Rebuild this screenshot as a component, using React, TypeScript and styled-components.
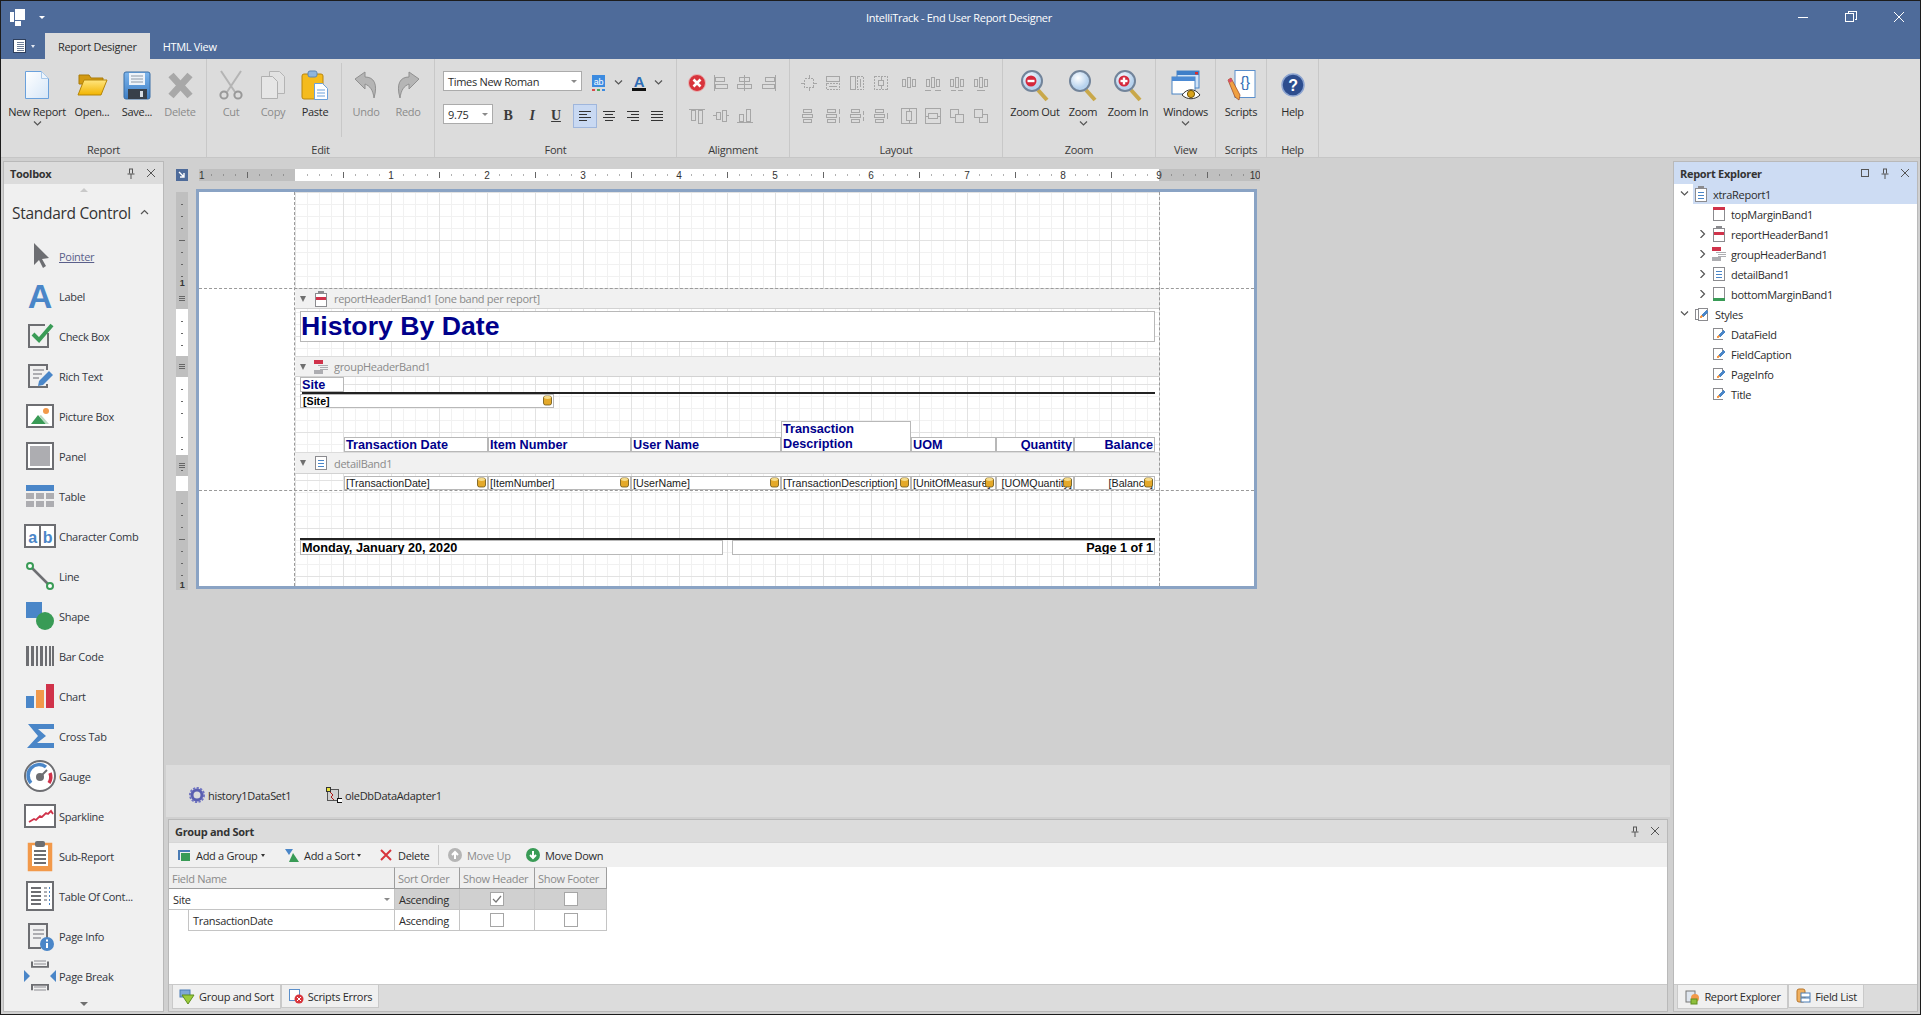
import React from 'react'
import styled, { createGlobalStyle, css } from 'styled-components'

const UI_FONT = `"Open Sans", "Noto Sans", sans-serif`
const REPORT_FONT = `"Liberation Sans", Arial, sans-serif`

const GlobalStyle = createGlobalStyle`
  html, body { margin: 0; padding: 0; background: #d0d0d0; overflow: hidden; }
  * { box-sizing: border-box; }
`

const Window = styled.div`
  width: 1921px;
  height: 1015px;
  display: flex;
  flex-direction: column;
  border: 1px solid #1c1c1c;
  background: #d0d0d0;
  color: #2b2b2b;
  font: 11px ${UI_FONT};
  letter-spacing: -0.3px;
  overflow: hidden;
`

/* ---------- title bar ---------- */

const TitleBar = styled.div`
  height: 32px;
  background: #4e6b9a;
  display: grid;
  grid-template-columns: 1fr auto 1fr;
  align-items: center;
  color: #fff;
`
const QuickAccess = styled.div`
  display: flex;
  align-items: center;
  gap: 12px;
  padding-left: 8px;
`
const TitleText = styled.div`
  font-size: 11px;
  margin-left: -3px;
`
const WindowButtons = styled.div`
  display: flex;
  justify-content: flex-end;
  align-items: center;
  gap: 34px;
  padding-right: 14px;
`
const TabStrip = styled.div`
  height: 26px;
  background: #4e6b9a;
  display: flex;
  align-items: stretch;
`
const AppMenu = styled.div`
  width: 44px;
  display: flex;
  align-items: center;
  gap: 4px;
  padding-left: 12px;
`
const RibbonTab = styled.div<{ $active?: boolean }>`
  padding: 0 13px;
  display: flex;
  align-items: center;
  font-size: 11px;
  color: ${p => (p.$active ? '#2b2b2b' : '#fff')};
  background: ${p => (p.$active ? '#dcdcdc' : 'transparent')};
`

/* ---------- ribbon ---------- */

const Ribbon = styled.div`
  height: 99px;
  background: #dcdcdc;
  border-bottom: 1px solid #c6c6c6;
  display: flex;
`
const RibbonGroup = styled.div<{ $w: number }>`
  width: ${p => p.$w}px;
  flex: none;
  border-right: 1px solid #c8c8c8;
  display: flex;
  flex-direction: column;
`
const GroupBody = styled.div<{ $pad?: number }>`
  height: 83px;
  display: flex;
  padding-left: ${p => p.$pad ?? 0}px;
`
const GroupLabel = styled.div`
  text-align: center;
  line-height: 15px;
  color: #3a3a3a;
`
const LargeButton = styled.div<{ $w: number; $off?: boolean }>`
  width: ${p => p.$w}px;
  flex: none;
  padding-top: 10px;
  display: flex;
  flex-direction: column;
  align-items: center;
  white-space: nowrap;
  color: ${p => (p.$off ? '#8b8b8b' : '#2b2b2b')};
`
const LargeLabel = styled.div`
  line-height: 16px;
  margin-top: 3px;
`
const ChevBox = styled.div`
  height: 8px;
  display: flex;
  align-items: center;
`
const GroupDivider = styled.div`
  width: 1px;
  height: 74px;
  margin: 4px 0 0 7px;
  background: #c8c8c8;
`
const SmallRows = styled.div<{ $pad?: number }>`
  display: flex;
  flex-direction: column;
  gap: 9px;
  padding: 12px 0 0 ${p => p.$pad ?? 0}px;
`
const SmallRow = styled.div`
  height: 24px;
  display: flex;
  align-items: flex-start;
`
const Cell = styled.div<{ $w?: number; $gap?: number; $active?: boolean }>`
  width: ${p => p.$w ?? 24}px;
  height: 24px;
  flex: none;
  margin-left: ${p => p.$gap ?? 0}px;
  display: flex;
  align-items: center;
  justify-content: center;
  ${p =>
    p.$active &&
    css`
      background: #c9d9f2;
      border: 1px solid #9fb6dc;
    `}
`
const StyleLetter = styled.span<{ $italic?: boolean; $underline?: boolean }>`
  font: bold 14px "Liberation Serif", serif;
  font-style: ${p => (p.$italic ? 'italic' : 'normal')};
  text-decoration: ${p => (p.$underline ? 'underline' : 'none')};
  color: #3a3a3a;
`
const Combo = styled.div<{ $w: number; $gap?: number }>`
  width: ${p => p.$w}px;
  height: 20px;
  flex: none;
  margin-left: ${p => p.$gap ?? 0}px;
  background: #fff;
  border: 1px solid #ababab;
  padding: 0 4px;
  display: flex;
  align-items: center;
  justify-content: space-between;
  font-size: 11px;
`
const ComboArrow = styled.span`
  width: 0;
  height: 0;
  border-left: 3px solid transparent;
  border-right: 3px solid transparent;
  border-top: 3px solid #8a8a8a;
`

/* ---------- workspace ---------- */

const Workspace = styled.div`
  flex: 1;
  display: flex;
  min-height: 0;
`
const DockPanel = styled.div<{ $w: number; $ml: number }>`
  width: ${p => p.$w}px;
  flex: none;
  margin: 3px 0 2px ${p => p.$ml}px;
  border: 1px solid #b9b9b9;
  display: flex;
  flex-direction: column;
  background: #f0f0f0;
  position: relative;
`
const PanelHeader = styled.div<{ $focus?: boolean }>`
  height: 22px;
  flex: none;
  padding: 0 7px 0 6px;
  display: flex;
  align-items: center;
  gap: 10px;
  background: ${p => (p.$focus ? '#cddcf3' : '#dcdcdc')};
  font-weight: 700;
  color: #333;
`
const PanelTitle = styled.div`
  flex: 1;
`

/* toolbox */
const ScrollMark = styled.div<{ $down?: boolean }>`
  height: ${p => (p.$down ? 14 : 12)}px;
  flex: none;
  display: flex;
  align-items: center;
  justify-content: center;
  &::after {
    content: '';
    border-left: 4px solid transparent;
    border-right: 4px solid transparent;
    ${p =>
      p.$down
        ? 'border-top: 4px solid #6f6f6f;'
        : 'border-bottom: 4px solid #c9c9c9;'}
  }
`
const CategoryRow = styled.div`
  height: 34px;
  flex: none;
  margin-bottom: 6px;
  display: flex;
  align-items: center;
  padding-left: 8px;
  font-size: 15.5px;
  color: #333;
  overflow: hidden;
  white-space: nowrap;
  gap: 9px;
`
const ToolList = styled.div`
  flex: 1;
  min-height: 0;
  overflow: hidden;
`
const ToolItem = styled.div`
  height: 40px;
  display: flex;
  align-items: center;
  padding-left: 20px;
  gap: 3px;
`
const ToolLabel = styled.span<{ $link?: boolean }>`
  white-space: nowrap;
  color: ${p => (p.$link ? '#5a5f8a' : '#33373f')};
  text-decoration: ${p => (p.$link ? 'underline' : 'none')};
`

/* designer */
const Center = styled.div`
  width: 1504px;
  flex: none;
  margin-left: 2px;
  display: flex;
  flex-direction: column;
`
const Designer = styled.div`
  flex: 1;
  padding: 11px 0 0 10px;
  background: #d0d0d0;
`
const RulerRow = styled.div`
  display: flex;
  gap: 11px;
  height: 12px;
  margin-bottom: 8px;
`
const RulerCorner = styled.div`
  width: 12px;
  height: 12px;
  background: #4e6b9a;
  display: flex;
  align-items: center;
  justify-content: center;
`
const PageRow = styled.div`
  display: flex;
  gap: 8px;
`
const SideRuler = styled.svg`
  width: 12px;
  height: 398px;
  margin-top: 3px;
  flex: none;
`
const Page = styled.div`
  width: 1061px;
  height: 400px;
  border: 3px solid #8aa3c4;
  background: #fff;
  letter-spacing: 0;
  display: grid;
  grid-template-columns: 95px 866px 1fr;
  position: relative;
`
const Printable = styled.div`
  grid-column: 2;
  display: flex;
  flex-direction: column;
  border-left: 1px dashed #9a9a9a;
  border-right: 1px dashed #9a9a9a;
  background-color: #fff;
  background-image:
    linear-gradient(to right, #e2e2e2 1px, transparent 1px),
    linear-gradient(to bottom, #e2e2e2 1px, transparent 1px),
    linear-gradient(to right, #f1f1f1 1px, transparent 1px),
    linear-gradient(to bottom, #f1f1f1 1px, transparent 1px);
  background-size: 48px 48px, 48px 48px, 12px 12px, 12px 12px;
`
const MarginLine = styled.div<{ $top: number }>`
  position: absolute;
  left: 0;
  right: 0;
  top: ${p => p.$top}px;
  border-top: 1px dashed #9a9a9a;
  pointer-events: none;
`
const BandHeader = styled.div<{ $h?: number }>`
  height: ${p => p.$h ?? 21}px;
  flex: none;
  background: #f1f1f1;
  border-top: 1px solid #dcdcdc;
  border-bottom: 1px solid #d2d2d2;
  display: flex;
  align-items: center;
  padding-left: 5px;
  gap: 6px;
  color: #8a8a8a;
  font-size: 11px;
  letter-spacing: -0.3px;
`
const BandArrow = styled.span`
  width: 0;
  height: 0;
  border-left: 3.5px solid transparent;
  border-right: 3.5px solid transparent;
  border-top: 6px solid #6f6f6f;
  margin-right: 2px;
`
const Band = styled.div<{ $h: number }>`
  height: ${p => p.$h}px;
  flex: none;
  position: relative;
`
// report controls sit on a free canvas inside their band
const Control = styled.div<{ $x: number; $y: number; $w: number; $h: number; $right?: boolean }>`
  position: absolute;
  left: ${p => p.$x}px;
  top: ${p => p.$y}px;
  width: ${p => p.$w}px;
  height: ${p => p.$h}px;
  background: #fff;
  border: 1px solid #b8b8b8;
  padding: 0 1px;
  font-family: ${REPORT_FONT};
  white-space: nowrap;
  overflow: hidden;
  text-align: ${p => (p.$right ? 'right' : 'left')};
`
const TitleField = styled(Control)`
  font-size: 26.67px;
  font-weight: 700;
  line-height: 29px;
  padding: 0;
  color: #00008b;
`
const CaptionField = styled(Control)`
  font-size: 12.67px;
  font-weight: 700;
  line-height: 15px;
  color: #00008b;
  white-space: normal;
`
const DataField = styled(Control)`
  font-size: 10.67px;
  line-height: 12px;
  color: #1a1a1a;
  overflow: visible;
`
const SiteField = styled(DataField)`
  font-weight: 700;
  color: #000;
  padding-left: 2px;
`
const InfoField = styled(Control)`
  font-size: 12.67px;
  font-weight: 700;
  line-height: 14px;
  color: #000;
`
const RuleLine = styled.div<{ $x: number; $y: number; $w: number }>`
  position: absolute;
  left: ${p => p.$x}px;
  top: ${p => p.$y}px;
  width: ${p => p.$w}px;
  height: 2px;
  background: #222;
`
const Binding = styled.svg`
  position: absolute;
  right: 1px;
  top: 0;
  width: 9px;
  height: 11px;
`

/* tray + group & sort */
const Tray = styled.div`
  height: 52px;
  flex: none;
  background: #dcdcdc;
  display: flex;
  align-items: center;
  gap: 3px;
  padding: 8px 0 0 23px;
`
const TrayItem = styled.div`
  display: flex;
  align-items: center;
  gap: 3px;
  width: 134px;
`
const GroupPanel = styled.div`
  height: 193px;
  flex: none;
  margin: 2px 2px 2px 2px;
  border: 1px solid #b9b9b9;
  background: #fff;
  display: flex;
  flex-direction: column;
`
const Toolbar = styled.div`
  height: 25px;
  flex: none;
  background: #f0f0f0;
  border-top: 1px solid #d6d6d6;
  display: flex;
  align-items: center;
  padding-left: 7px;
`
const ToolbarButton = styled.div<{ $w: number; $off?: boolean }>`
  width: ${p => p.$w}px;
  flex: none;
  display: flex;
  align-items: center;
  gap: 4px;
  white-space: nowrap;
  color: ${p => (p.$off ? '#8b8b8b' : '#2b2b2b')};
`
const ToolbarCaret = styled.span`
  border-left: 2.5px solid transparent;
  border-right: 2.5px solid transparent;
  border-top: 3px solid #333;
  margin-left: -1px;
`
const ToolbarSeparator = styled.div`
  width: 1px;
  height: 20px;
  margin: 0 8px 0 1px;
  background: #c9c9c9;
`
const GridBody = styled.div`
  flex: 1;
  min-height: 0;
  display: grid;
  grid-template-columns: 226px 65px 75px 72px;
  grid-template-rows: 22px 21px 21px;
  align-content: start;
  background: #fff;
`
const GridHeadCell = styled.div`
  background: #efefef;
  border-top: 1px solid #c9c9c9;
  border-right: 1px solid #9d9d9d;
  border-bottom: 1px solid #9d9d9d;
  color: #8a8a8a;
  padding: 0 3px;
  white-space: nowrap;
  display: flex;
  align-items: center;
`
const GridCell = styled.div<{ $shade?: boolean; $indent?: number; $center?: boolean }>`
  margin-left: ${p => p.$indent ?? 0}px;
  border-right: 1px solid #c4c4c4;
  border-bottom: 1px solid #c4c4c4;
  ${p => p.$indent && 'border-left: 1px solid #c4c4c4;'}
  background: ${p => (p.$shade ? '#d0d0d0' : '#fff')};
  display: flex;
  align-items: center;
  justify-content: ${p => (p.$center ? 'center' : 'space-between')};
  padding: 0 4px;
`
const CheckMark = styled.div`
  width: 14px;
  height: 14px;
  background: #fff;
  border: 1px solid #a6a6a6;
  display: flex;
  align-items: center;
  justify-content: center;
`
const BottomTabs = styled.div`
  height: 27px;
  flex: none;
  background: #dcdcdc;
  border-top: 1px solid #c9c9c9;
  display: flex;
  align-items: flex-start;
  padding-left: 3px;
`
const DockTab = styled.div<{ $active?: boolean; $w: number }>`
  width: ${p => p.$w}px;
  height: ${p => (p.$active ? 24 : 23)}px;
  background: #f0f0f0;
  border: 1px solid #c9c9c9;
  border-top: none;
  display: flex;
  align-items: center;
  justify-content: center;
  gap: 4px;
  white-space: nowrap;
`

/* report explorer */
const Tree = styled.div`
  flex: 1;
  background: #fff;
`
const TreeRow = styled.div`
  height: 20px;
  display: flex;
  align-items: center;
`
const Twist = styled.div<{ $level: number }>`
  width: 18px;
  margin-left: ${p => 1 + p.$level * 18}px;
  flex: none;
  display: flex;
  align-items: center;
  justify-content: center;
`
const TreeBody = styled.div<{ $selected?: boolean }>`
  flex: 1;
  height: 20px;
  display: flex;
  align-items: center;
  gap: 5px;
  padding-left: 1px;
  background: ${p => (p.$selected ? '#cddcf3' : 'transparent')};
`

/* ---------- icons ---------- */

const SmallSvg = styled.svg`
  width: 18px;
  height: 18px;
  fill: none;
  stroke: #a6a6a6;
  shape-rendering: crispEdges;
`
const Sm = ({ children }: { children: React.ReactNode }) => <SmallSvg viewBox="0 0 18 18">{children}</SmallSvg>

const Svg = ({ s = 32, children }: { s?: number; children: React.ReactNode }) => (
  <svg width={s} height={s} viewBox={`0 0 ${s} ${s}`} style={{ flex: 'none', overflow: 'visible' }}>
    {children}
  </svg>
)

const Chev = ({ dir = 'down' }: { dir?: 'down' | 'up' | 'right' }) => {
  const d = dir === 'down' ? 'M1 1.5l3.5 3.5L8 1.5' : dir === 'up' ? 'M1 5l3.5-3.5L8 5' : 'M2.5 0l4 4-4 4'
  return (
    <svg width="9" height="8" viewBox="0 0 9 8">
      <path d={d} fill="none" stroke="#555" strokeWidth="1.2" />
    </svg>
  )
}

const NewDoc = () => (
  <Svg>
    <defs>
      <linearGradient id="docg" x1="0" y1="0" x2="1" y2="1">
        <stop offset="0" stopColor="#fff" />
        <stop offset="1" stopColor="#d5e6f8" />
      </linearGradient>
    </defs>
    <path d="M4.5 2.5h16l7 7v20h-23z" fill="url(#docg)" stroke="#6aa1dc" />
    <path d="M20.5 2.5v7h7" fill="#eef5fc" stroke="#a9c9ea" />
  </Svg>
)
const Folder = () => (
  <Svg>
    <defs>
      <linearGradient id="fold" x1="0" y1="0" x2="0" y2="1">
        <stop offset="0" stopColor="#ffe680" />
        <stop offset="1" stopColor="#f2b400" />
      </linearGradient>
    </defs>
    <path d="M3 6h10l2 3h12v6H3z" fill="#d39a12" stroke="#a97a08" />
    <path d="M8 11h23l-6 15H2z" fill="url(#fold)" stroke="#b58508" />
  </Svg>
)
const Floppy = () => (
  <Svg>
    <defs>
      <linearGradient id="flop" x1="0" y1="0" x2="0" y2="1">
        <stop offset="0" stopColor="#7db5ec" />
        <stop offset="1" stopColor="#3e7fc6" />
      </linearGradient>
    </defs>
    <rect x="3" y="3" width="26" height="27" rx="2" fill="url(#flop)" stroke="#3a6ea5" />
    <rect x="8" y="4" width="16" height="12" fill="#eef3f9" />
    <path d="M10 7h12M10 10h12M10 13h12" stroke="#8d99a6" />
    <rect x="7" y="20" width="19" height="10" fill="#38404a" />
    <rect x="19" y="22" width="3" height="6" fill="#d6dce3" />
  </Svg>
)
const GreyX = () => (
  <Svg>
    <path d="M7 6l19 21M26 6L7 27" stroke="#a8a8a8" strokeWidth="7" />
  </Svg>
)
const Scissors = () => (
  <Svg>
    <path d="M6 2l14 21M26 2L12 23" stroke="#b4b4b4" strokeWidth="2" fill="none" />
    <circle cx="9" cy="26" r="3.6" fill="none" stroke="#999" strokeWidth="2" />
    <circle cx="23" cy="26" r="3.6" fill="none" stroke="#999" strokeWidth="2" />
  </Svg>
)
const CopyDocs = () => (
  <Svg>
    <path d="M12.5 2.5h10l5 5v17h-15z" fill="#e2e2e2" stroke="#b4b4b4" />
    <path d="M4.5 7.5h11l5 5v17h-16z" fill="#e6e6e6" stroke="#b0b0b0" />
  </Svg>
)
const Paste = () => (
  <Svg>
    <rect x="3" y="5" width="21" height="25" rx="2" fill="#f5bb1d" stroke="#b9860d" />
    <rect x="9" y="2" width="9" height="6" rx="2" fill="#8fb5dc" stroke="#5d88b5" />
    <path d="M15.5 14.5h8l5 5v11h-13z" fill="#fff" stroke="#6aa1dc" />
    <path d="M18 21h8M18 24h8M18 27h8" stroke="#6aa1dc" />
  </Svg>
)
const UndoArrow = ({ flip }: { flip?: boolean }) => (
  <Svg>
    <g transform={flip ? 'matrix(-1 0 0 1 32 0)' : undefined}>
      <path d="M5 10l10-7v5c9 0 13 7 9 21-1-8-4-12-9-14v5z" fill="#b5b5b5" stroke="#909090" />
    </g>
  </Svg>
)
const Magnifier = ({ sign }: { sign?: 'plus' | 'minus' }) => (
  <Svg>
    <defs>
      <radialGradient id="lens" cx="0.4" cy="0.35">
        <stop offset="0" stopColor="#fff" />
        <stop offset="1" stopColor="#b8d3ee" />
      </radialGradient>
    </defs>
    <path d="M19 21l9 10" stroke="#c9a84a" strokeWidth="4" />
    <circle cx="13" cy="12" r="10" fill="url(#lens)" stroke="#72849a" strokeWidth="2" />
    {sign && <circle cx="12" cy="12" r="5.5" fill="#d5283c" />}
    {sign && <path d="M8.5 12h7" stroke="#fff" strokeWidth="2.4" />}
    {sign === 'plus' && <path d="M12 8.5v7" stroke="#fff" strokeWidth="2.4" />}
  </Svg>
)
const WindowsIcon = () => (
  <Svg>
    <rect x="7" y="2" width="22" height="17" fill="#cfe2f7" stroke="#4b84c4" />
    <rect x="7" y="2" width="22" height="4" fill="#3f7fc8" />
    <rect x="25" y="3" width="3" height="2.4" fill="#d92c2c" />
    <rect x="2" y="8" width="23" height="17" fill="#fff" stroke="#4b84c4" />
    <rect x="2" y="8" width="23" height="4" fill="#4b8ad4" />
    <path d="M12 26c5-7 13-7 18 0-5 5-13 5-18 0z" fill="#fff" stroke="#333" />
    <circle cx="21" cy="25" r="3.6" fill="#d8a21a" stroke="#6c5208" />
  </Svg>
)
const ScriptsIcon = () => (
  <Svg>
    <rect x="10" y="1.5" width="20" height="27" fill="#fff" stroke="#5b8fcb" />
    <text x="20" y="18" textAnchor="middle" fontFamily={REPORT_FONT} fontSize="15" fill="#2f6db5">
      {'{}'}
    </text>
    <path d="M3 11l3-2 9 17-1 5-4-3z" fill="#f0a040" stroke="#a0522d" strokeWidth="0.8" />
    <path d="M3 11l3-2 1.5 3-3 2z" fill="#d9506a" />
  </Svg>
)
const HelpIcon = () => (
  <Svg>
    <circle cx="16" cy="16" r="11" fill="#2d4d8e" stroke="#8ba3d0" strokeWidth="1.5" />
    <text x="16" y="21.5" textAnchor="middle" fontFamily={REPORT_FONT} fontWeight="700" fontSize="16" fill="#fff">
      ?
    </text>
  </Svg>
)

/* alignment + layout glyphs, grey because nothing is selected */
const alignTop = [
  <Sm key="l">
    <path d="M2.5 1v16" />
    <rect x="3.5" y="3.5" width="9" height="4" />
    <rect x="3.5" y="10.5" width="12" height="4" />
  </Sm>,
  <Sm key="c">
    <path d="M8.5 1v16" />
    <rect x="3.5" y="3.5" width="10" height="4" />
    <rect x="1.5" y="10.5" width="14" height="4" />
  </Sm>,
  <Sm key="r">
    <path d="M15.5 1v16" />
    <rect x="5.5" y="3.5" width="9" height="4" />
    <rect x="2.5" y="10.5" width="12" height="4" />
  </Sm>,
]
const alignBottom = [
  <Sm key="t">
    <path d="M1 2.5h16" />
    <rect x="3.5" y="3.5" width="4" height="10" />
    <rect x="10.5" y="3.5" width="4" height="13" />
  </Sm>,
  <Sm key="m">
    <path d="M1 8.5h3M14 8.5h3" />
    <rect x="4.5" y="5.5" width="4" height="7" />
    <rect x="10.5" y="3.5" width="4" height="11" />
  </Sm>,
  <Sm key="b">
    <path d="M1 15.5h16" />
    <rect x="3.5" y="7.5" width="4" height="7" />
    <rect x="10.5" y="2.5" width="4" height="12" />
  </Sm>,
]
const HBars = ({ a, b }: { a?: string; b?: string }) => (
  <Sm>
    <rect x="2.5" y="5.5" width="3" height="7" />
    <rect x="7.5" y="3.5" width="3" height="10" />
    <rect x="12.5" y="5.5" width="3" height="7" />
    {a && <path d={a} />}
    {b && <path d={b} />}
  </Sm>
)
const VBars = ({ a }: { a?: string }) => (
  <Sm>
    <rect x="3.5" y="2.5" width="8" height="3" />
    <rect x="2.5" y="7.5" width="10" height="3" />
    <rect x="3.5" y="12.5" width="8" height="3" />
    {a && <path d={a} />}
  </Sm>
)
const layoutTop = [
  <Sm key="1">
    <rect x="4.5" y="4.5" width="9" height="9" strokeDasharray="2 1" />
    <path d="M9 1v3M9 14v3M1 9h3M14 9h3" />
  </Sm>,
  <Sm key="2">
    <rect x="2.5" y="2.5" width="13" height="5" />
    <rect x="2.5" y="9.5" width="13" height="6" strokeDasharray="2 1" />
    <path d="M5 12.5h8" />
  </Sm>,
  <Sm key="3">
    <rect x="2.5" y="2.5" width="5" height="13" />
    <rect x="9.5" y="2.5" width="6" height="13" strokeDasharray="2 1" />
    <path d="M12.5 5v8" />
  </Sm>,
  <Sm key="4">
    <rect x="2.5" y="2.5" width="13" height="13" strokeDasharray="2 1" />
    <rect x="6.5" y="6.5" width="5" height="5" />
    <path d="M9 3v3M9 12v3" />
  </Sm>,
  <HBars key="5" />,
  <HBars key="6" a="M1 16h6M11 16h6" />,
  <HBars key="7" a="M3 16h5M10 16h5" />,
  <HBars key="8" a="M5 16h8" />,
]
const layoutBottom = [
  <VBars key="1" />,
  <VBars key="2" a="M15.5 2v5M15.5 10v6" />,
  <VBars key="3" a="M15.5 4v4M15.5 10v4" />,
  <VBars key="4" a="M15.5 6v6" />,
  <Sm key="5">
    <rect x="1.5" y="1.5" width="15" height="15" />
    <rect x="6.5" y="4.5" width="5" height="9" />
    <path d="M9 1v3M9 14v3" />
  </Sm>,
  <Sm key="6">
    <rect x="1.5" y="1.5" width="15" height="15" />
    <rect x="4.5" y="6.5" width="9" height="5" />
    <path d="M1 9h3M14 9h3" />
  </Sm>,
  <Sm key="7">
    <rect x="2.5" y="2.5" width="8" height="8" />
    <rect x="7.5" y="7.5" width="8" height="8" fill="#dcdcdc" />
  </Sm>,
  <Sm key="8">
    <rect x="7.5" y="7.5" width="8" height="8" />
    <rect x="2.5" y="2.5" width="8" height="8" fill="#dcdcdc" />
  </Sm>,
]

const TextAlign = ({ lines }: { lines: string }) => (
  <svg width="14" height="12" viewBox="0 0 14 12" shapeRendering="crispEdges">
    <path d={lines} stroke="#333" fill="none" />
  </svg>
)

const GREY = '#6d6e72'
const BLUE = '#4a86c8'
const GREEN = '#399b56'
const RED = '#d0324a'
const ORANGE = '#f2994a'
const LIGHT = '#adadb1'

const toolIcons: Record<string, React.ReactNode> = {
  Pointer: <path d="M14 3v22l5-5 4 8 3-2-4-7 7-1z" fill={GREY} transform="translate(-4 0)" />,
  Label: (
    <text x="16" y="28" textAnchor="middle" fontFamily={REPORT_FONT} fontWeight="700" fontSize="34" fill={BLUE}>
      A
    </text>
  ),
  'Check Box': (
    <>
      <path d="M24 13v14H5V5h16" fill="none" stroke={GREY} strokeWidth="2" />
      <path d="M9 14l6 6L28 5" fill="none" stroke={GREEN} strokeWidth="4" />
    </>
  ),
  'Rich Text': (
    <>
      <path d="M23 10V5H5v22h18v-3" fill="none" stroke={GREY} strokeWidth="2" />
      <path d="M9 10h11M9 14h9M9 18h6" stroke={LIGHT} strokeWidth="2" />
      <path d="M14 26l1-5 10-10 4 4-10 10z" fill={BLUE} />
    </>
  ),
  'Picture Box': (
    <>
      <rect x="3" y="5" width="26" height="22" fill="#fff" stroke={GREY} strokeWidth="2" />
      <path d="M7 24l7-9 8 9z" fill={GREEN} />
      <path d="M17 15l8 9h-3l-7-8z" fill="#b6d8c0" />
      <circle cx="22" cy="11" r="3" fill={ORANGE} />
    </>
  ),
  Panel: (
    <>
      <rect x="3" y="3" width="26" height="26" fill="#fff" stroke={GREY} strokeWidth="2" />
      <rect x="6" y="6" width="20" height="20" fill={LIGHT} />
    </>
  ),
  Table: (
    <>
      <rect x="2" y="5" width="28" height="6" fill={BLUE} />
      <path d="M2 13h8v6H2zM12 13h8v6h-8zM22 13h8v6h-8zM2 21h8v6H2zM12 21h8v6h-8zM22 21h8v6h-8z" fill={LIGHT} />
    </>
  ),
  'Character Comb': (
    <>
      <rect x="1" y="5" width="30" height="22" fill="#fff" stroke={GREY} strokeWidth="2" />
      <path d="M16 5v22" stroke={GREY} strokeWidth="2" />
      <text x="8.5" y="23" textAnchor="middle" fontFamily={REPORT_FONT} fontWeight="700" fontSize="16" fill={BLUE}>
        a
      </text>
      <text x="23.5" y="23" textAnchor="middle" fontFamily={REPORT_FONT} fontWeight="700" fontSize="16" fill={BLUE}>
        b
      </text>
    </>
  ),
  Line: (
    <>
      <path d="M7 7l18 18" stroke={GREY} strokeWidth="2.5" />
      <circle cx="6" cy="6" r="3" fill="#fff" stroke={GREEN} strokeWidth="2" />
      <circle cx="26" cy="26" r="3" fill="#fff" stroke={GREEN} strokeWidth="2" />
    </>
  ),
  Shape: (
    <>
      <rect x="2" y="2" width="16" height="16" fill={BLUE} />
      <circle cx="21" cy="21" r="9" fill={GREEN} />
    </>
  ),
  'Bar Code': <path d="M2 6h3v20H2zM7 6h3v20H7zM12 6h2v20h-2zM16 6h3v20h-3zM21 6h2v20h-2zM25 6h2v20h-2zM28 6h2v20h-2z" fill={GREY} />,
  Chart: (
    <>
      <rect x="2" y="16" width="8" height="12" fill={BLUE} />
      <rect x="12" y="10" width="8" height="18" fill={ORANGE} />
      <rect x="22" y="4" width="8" height="24" fill={RED} />
    </>
  ),
  'Cross Tab': <path d="M4 4h26v5H14l8 7-9 7h17v5H3l11-12z" fill={BLUE} />,
  Gauge: (
    <>
      <circle cx="16" cy="16" r="15" fill="#fff" stroke={GREY} strokeWidth="2" />
      <path d="M7 23A11 11 0 0 1 22 7" fill="none" stroke={BLUE} strokeWidth="3.5" />
      <path d="M26 13a11 11 0 0 1-1 10" fill="none" stroke={RED} strokeWidth="3.5" />
      <circle cx="16" cy="17" r="4" fill={GREY} />
      <path d="M16 17l7-7" stroke={GREY} strokeWidth="2" />
    </>
  ),
  Sparkline: (
    <>
      <rect x="1" y="5" width="30" height="22" fill="#fff" stroke={GREY} strokeWidth="2" />
      <path d="M5 22l5-3 2 1 4-4 2 1 4-4 2 1 3-3 2 3" fill="none" stroke={RED} strokeWidth="1.8" />
    </>
  ),
  'Sub-Report': (
    <>
      <rect x="5" y="4" width="22" height="26" fill="#fff" stroke={ORANGE} strokeWidth="2.5" />
      <rect x="5" y="4" width="3" height="26" fill={ORANGE} />
      <rect x="24" y="4" width="3" height="26" fill={ORANGE} />
      <rect x="5" y="26" width="22" height="4" fill={ORANGE} />
      <rect x="11" y="1" width="10" height="6" rx="2" fill={GREY} />
      <path d="M10 11h12M10 15h12M10 19h12M10 23h12" stroke={GREY} strokeWidth="2" />
    </>
  ),
  'Table Of Cont...': (
    <>
      <rect x="3" y="2" width="26" height="28" fill="#fff" stroke={GREY} strokeWidth="2" />
      <path d="M7 8h10M7 12h10M7 16h10M7 20h10M7 24h10" stroke={GREY} strokeWidth="1.8" />
      <path d="M20 8h3M20 12h3M20 16h3M20 20h3" stroke={LIGHT} strokeWidth="1.8" />
      <path d="M25 8h2M25 12h2M25 16h2M25 20h2M25 24h2" stroke={BLUE} strokeWidth="1.8" strokeDasharray="1 1" />
    </>
  ),
  'Page Info': (
    <>
      <path d="M23 18V4H5v24h12" fill="none" stroke={GREY} strokeWidth="2" />
      <path d="M9 10h11M9 14h11M9 18h8" stroke={LIGHT} strokeWidth="2" />
      <circle cx="23" cy="24" r="7" fill={BLUE} />
      <path d="M23 23v5" stroke="#fff" strokeWidth="2" />
      <path d="M23 19.5v2" stroke="#fff" strokeWidth="2" />
    </>
  ),
  'Page Break': (
    <>
      <path d="M8 0v6h16V0M8 32v-6h16v6" fill="none" stroke={GREY} strokeWidth="2" transform="matrix(1 0 0 .9 0 1.5)" />
      <path d="M10 1h12M10 4h12M10 27h12M10 30h12" stroke={LIGHT} strokeWidth="1.5" />
      <path d="M0 10v12l6-6zM32 10v12l-6-6z" fill={BLUE} />
    </>
  ),
}

const BandGlyph = ({ kind }: { kind: string }) => {
  const frame = '#8b8b8f'
  return (
    <svg width="14" height="16" viewBox="0 0 14 16" shapeRendering="crispEdges" style={{ flex: 'none' }}>
      {kind === 'report' && (
        <>
          <rect x="1.5" y="2.5" width="11" height="13" fill="#fff" stroke={frame} />
          <rect x="4" y="0" width="6" height="3" fill={frame} />
          <path d="M4 6h6M4 9h6M4 12h6" stroke={BLUE} />
        </>
      )}
      {kind === 'top' && (
        <>
          <rect x="1.5" y="2.5" width="11" height="12" fill="#fff" stroke={frame} />
          <rect x="1" y="1" width="12" height="3" fill={RED} />
        </>
      )}
      {kind === 'header' && (
        <>
          <rect x="1.5" y="2.5" width="11" height="13" fill="#fff" stroke={frame} />
          <rect x="4" y="0" width="6" height="3" fill={frame} />
          <rect x="2" y="6" width="10" height="3" fill={RED} />
        </>
      )}
      {kind === 'group' && (
        <>
          <rect x="0" y="1" width="9" height="4" fill={RED} />
          <path d="M4 6.5h10M6 8.5h8M6 10.5h8" stroke={LIGHT} />
          <rect x="0" y="11" width="9" height="4" fill={LIGHT} />
        </>
      )}
      {kind === 'detail' && (
        <>
          <rect x="1.5" y="1.5" width="11" height="13" fill="#fff" stroke={frame} />
          <path d="M4 5h6M4 8h6M4 11h6" stroke={BLUE} />
        </>
      )}
      {kind === 'bottom' && (
        <>
          <rect x="1.5" y="1.5" width="11" height="12" fill="#fff" stroke={frame} />
          <rect x="1" y="12" width="12" height="3" fill={GREEN} />
        </>
      )}
      {kind === 'style' && (
        <>
          <path d="M10.5 6V2.5h-9v11h9" fill="#fff" stroke={frame} />
          <path d="M5 12l1-3 5-5 2 2-5 5z" fill={BLUE} />
          <path d="M5 12l1-3 2 2z" fill={ORANGE} />
        </>
      )}
    </svg>
  )
}

const StylesGlyph = () => (
  <svg width="16" height="16" viewBox="0 0 16 16" shapeRendering="crispEdges" style={{ flex: 'none' }}>
    <path d="M4.5 13.5h-3v-10h3" fill="none" stroke="#8b8b8f" />
    <rect x="4.5" y="2.5" width="9" height="12" fill="#fff" stroke="#8b8b8f" />
    <path d="M6 12l1-3 5-5 2 2-5 5z" fill={BLUE} />
    <path d="M6 12l1-3 2 2z" fill={ORANGE} />
  </svg>
)

const BindingIcon = () => (
  <Binding viewBox="0 0 9 11">
    <rect x="0.5" y="1" width="8" height="9" rx="2" fill="#e4a92a" stroke="#6b5312" strokeWidth="0.8" />
    <ellipse cx="4.5" cy="2.5" rx="3.5" ry="1.4" fill="#f6dc8c" />
  </Binding>
)

/* ---------- rulers ---------- */

const TopRuler = () => {
  const ticks = []
  for (let x = 0; x <= 1056; x += 12) {
    const half = x % 48 === 0
    const inch = x % 96 === 0
    if (inch) continue
    ticks.push(half ? <rect key={x} x={x} y="3" width="1" height="6" fill="#666" /> : <rect key={x} x={x} y="5.5" width="1" height="1" fill="#666" />)
  }
  const numbers = [1, 2, 3, 4, 5, 6, 7, 8, 9, 10]
  return (
    <svg width="1061" height="12" viewBox="0 0 1061 12" style={{ flex: 'none' }}>
      <rect width="1061" height="12" fill="#fff" />
      <rect width="96" height="12" fill="#bfbfbf" />
      <rect x="960" width="101" height="12" fill="#bfbfbf" />
      <text x="0" y="10" fontSize="10" fontFamily={REPORT_FONT} fill="#333">
        1
      </text>
      {ticks}
      {numbers.map(n => (
        <text key={n} x={96 + n * 96} y="10" textAnchor="middle" fontSize="10" fontFamily={REPORT_FONT} fill="#333">
          {n}
        </text>
      ))}
    </svg>
  )
}

const VerticalRuler = () => {
  const greys = [
    [0, 96],
    [299, 99],
  ]
  const handles = [96, 164, 263]
  const dots = [12, 24, 36, 60, 72, 84, 129, 141, 153, 197, 209, 221, 245, 257, 278, 311, 323, 335, 359, 371, 383]
  return (
    <SideRuler viewBox="0 0 12 398">
      <rect width="12" height="398" fill="#fff" />
      {greys.map(([y, h]) => (
        <rect key={y} y={y} width="12" height={h} fill="#bfbfbf" />
      ))}
      {handles.map(y => (
        <g key={y}>
          <rect y={y} width="12" height="21" fill="#bfbfbf" />
          <path d={`M3 ${y + 8.5}h6M3 ${y + 10.5}h6M3 ${y + 12.5}h6`} stroke="#666" />
        </g>
      ))}
      {dots.map(y => (
        <rect key={y} x="5" y={y} width="2" height="1" fill="#666" />
      ))}
      <rect x="3" y="48" width="6" height="1" fill="#666" />
      <rect x="3" y="347" width="6" height="1" fill="#666" />
      <text x="6" y="94" textAnchor="middle" fontSize="9" fontWeight="700" fontFamily={REPORT_FONT} fill="#333">
        1
      </text>
      <text x="6" y="396" textAnchor="middle" fontSize="9" fontWeight="700" fontFamily={REPORT_FONT} fill="#333">
        1
      </text>
    </SideRuler>
  )
}

/* ---------- data ---------- */

const leftButtons: { label: string; w: number; off?: boolean; menu?: boolean; icon: React.ReactNode }[][] = [
  [
    { label: 'New Report', w: 62, menu: true, icon: <NewDoc /> },
    { label: 'Open...', w: 48, icon: <Folder /> },
    { label: 'Save...', w: 42, icon: <Floppy /> },
    { label: 'Delete', w: 44, off: true, icon: <GreyX /> },
  ],
  [
    { label: 'Cut', w: 38, off: true, icon: <Scissors /> },
    { label: 'Copy', w: 46, off: true, icon: <CopyDocs /> },
    { label: 'Paste', w: 38, icon: <Paste /> },
  ],
]
const zoomButtons = [
  { label: 'Zoom Out', w: 52, icon: <Magnifier sign="minus" /> },
  { label: 'Zoom', w: 44, menu: true, icon: <Magnifier /> },
  { label: 'Zoom In', w: 46, icon: <Magnifier sign="plus" /> },
]
const tools = Object.keys(toolIcons)

const captions = [
  { text: 'Transaction Date', x: 49, w: 144 },
  { text: 'Item Number', x: 193, w: 143 },
  { text: 'User Name', x: 336, w: 150 },
  { text: 'UOM', x: 616, w: 85 },
  { text: 'Quantity', x: 701, w: 78, right: true },
  { text: 'Balance', x: 779, w: 81, right: true },
]
const fields = [
  { text: '[TransactionDate]', x: 49, w: 144 },
  { text: '[ItemNumber]', x: 193, w: 143 },
  { text: '[UserName]', x: 336, w: 150 },
  { text: '[TransactionDescription]', x: 486, w: 130 },
  { text: '[UnitOfMeasure]', x: 616, w: 85 },
  { text: '[UOMQuantity]', x: 701, w: 78, right: true },
  { text: '[Balance]', x: 779, w: 81, right: true },
]
const treeRows = [
  { label: 'xtraReport1', level: 0, twist: 'down', icon: 'report', selected: true },
  { label: 'topMarginBand1', level: 1, icon: 'top' },
  { label: 'reportHeaderBand1', level: 1, twist: 'right', icon: 'header' },
  { label: 'groupHeaderBand1', level: 1, twist: 'right', icon: 'group' },
  { label: 'detailBand1', level: 1, twist: 'right', icon: 'detail' },
  { label: 'bottomMarginBand1', level: 1, twist: 'right', icon: 'bottom' },
  { label: 'Styles', level: 0, twist: 'down', icon: 'styles' },
  { label: 'DataField', level: 1, icon: 'style' },
  { label: 'FieldCaption', level: 1, icon: 'style' },
  { label: 'PageInfo', level: 1, icon: 'style' },
  { label: 'Title', level: 1, icon: 'style' },
]

const PanelControls = ({ maximize }: { maximize?: boolean }) => (
  <>
    {maximize && (
      <svg width="10" height="10" viewBox="0 0 10 10">
        <rect x="1.5" y="1.5" width="7" height="7" fill="none" stroke="#555" />
      </svg>
    )}
    <svg width="10" height="11" viewBox="0 0 10 11">
      <path d="M3 1h4M3.5 1v4.5M6.5 1v4.5M1.5 6h7M5 6v5" fill="none" stroke="#555" />
    </svg>
    <svg width="10" height="10" viewBox="0 0 10 10">
      <path d="M1 1l8 8M9 1l-8 8" stroke="#555" />
    </svg>
  </>
)

const BigButton = ({ b }: { b: { label: string; w: number; off?: boolean; menu?: boolean; icon: React.ReactNode } }) => (
  <LargeButton $w={b.w} $off={b.off}>
    {b.icon}
    <LargeLabel>{b.label}</LargeLabel>
    {b.menu && (
      <ChevBox>
        <Chev />
      </ChevBox>
    )}
  </LargeButton>
)

export default function App() {
  return (
    <Window>
      <GlobalStyle />

      <TitleBar>
        <QuickAccess>
          <svg width="18" height="18" viewBox="0 0 18 18" shapeRendering="crispEdges">
            <path d="M6 1h10v11H6zM1 4h4v10H1zM6 13h6v5H6z" fill="#fff" />
          </svg>
          <svg width="7" height="5" viewBox="0 0 7 5">
            <path d="M0 1h6L3 4z" fill="#fff" />
          </svg>
        </QuickAccess>
        <TitleText>IntelliTrack - End User Report Designer</TitleText>
        <WindowButtons>
          <svg width="14" height="14" viewBox="0 0 14 14" shapeRendering="crispEdges">
            <path d="M2 7.5h10" stroke="#fff" />
          </svg>
          <svg width="14" height="14" viewBox="0 0 14 14" shapeRendering="crispEdges">
            <path d="M4.5 3V1.5h8v8H11" fill="none" stroke="#fff" />
            <rect x="1.5" y="3.5" width="8" height="8" fill="none" stroke="#fff" />
          </svg>
          <svg width="14" height="14" viewBox="0 0 14 14">
            <path d="M2 2l10 10M12 2L2 12" stroke="#fff" />
          </svg>
        </WindowButtons>
      </TitleBar>

      <TabStrip>
        <AppMenu>
          <svg width="14" height="14" viewBox="0 0 14 14" shapeRendering="crispEdges">
            <rect x="0.5" y="0.5" width="12" height="13" fill="#fff" stroke="#2e3f5c" />
            <path d="M4 3h7M4 5h7M4 7h7M4 9h7M4 11h7" stroke="#6f7f99" />
          </svg>
          <svg width="4" height="3" viewBox="0 0 4 3">
            <path d="M0 0h4L2 3z" fill="#e4e9f2" />
          </svg>
        </AppMenu>
        <RibbonTab $active>Report Designer</RibbonTab>
        <RibbonTab>HTML View</RibbonTab>
      </TabStrip>

      <Ribbon>
        <RibbonGroup $w={206}>
          <GroupBody $pad={5}>
            {leftButtons[0].map(b => (
              <BigButton key={b.label} b={b} />
            ))}
          </GroupBody>
          <GroupLabel>Report</GroupLabel>
        </RibbonGroup>

        <RibbonGroup $w={228}>
          <GroupBody $pad={5}>
            {leftButtons[1].map(b => (
              <BigButton key={b.label} b={b} />
            ))}
            <GroupDivider />
            <BigButton b={{ label: 'Undo', w: 48, off: true, icon: <UndoArrow /> }} />
            <BigButton b={{ label: 'Redo', w: 36, off: true, icon: <UndoArrow flip /> }} />
          </GroupBody>
          <GroupLabel>Edit</GroupLabel>
        </RibbonGroup>

        <RibbonGroup $w={242}>
          <GroupBody>
            <SmallRows $pad={8}>
              <SmallRow>
                <Combo $w={139}>
                  Times New Roman
                  <ComboArrow />
                </Combo>
                <Cell $w={24} $gap={5}>
                  <svg width="16" height="18" viewBox="0 0 16 18">
                    <rect x="1" y="1" width="13" height="12" fill="#3c8be0" />
                    <text x="7.5" y="10.5" textAnchor="middle" fontSize="9" fontFamily={REPORT_FONT} fill="#fff">
                      ab
                    </text>
                    <path d="M1 15h3v2H1z" fill="#d94a4a" />
                    <path d="M6 15h3v2H6z" fill="#4aa85c" />
                    <path d="M11 15h3v2h-3z" fill="#3c8be0" />
                  </svg>
                </Cell>
                <Cell $w={14}>
                  <Chev />
                </Cell>
                <Cell $w={28}>
                  <svg width="16" height="18" viewBox="0 0 16 18">
                    <text x="8" y="13" textAnchor="middle" fontSize="15" fontWeight="700" fontFamily={REPORT_FONT} fill="#2f6db5">
                      A
                    </text>
                    <rect x="1" y="14" width="14" height="3" fill="#111" />
                  </svg>
                </Cell>
                <Cell $w={10}>
                  <Chev />
                </Cell>
              </SmallRow>
              <SmallRow>
                <Combo $w={50}>
                  9.75
                  <ComboArrow />
                </Combo>
                <Cell $gap={3}>
                  <StyleLetter>B</StyleLetter>
                </Cell>
                <Cell>
                  <StyleLetter $italic>I</StyleLetter>
                </Cell>
                <Cell>
                  <StyleLetter $underline>U</StyleLetter>
                </Cell>
                <Cell $gap={5} $active>
                  <TextAlign lines="M1 1.5h12M1 4.5h8M1 7.5h12M1 10.5h8" />
                </Cell>
                <Cell>
                  <TextAlign lines="M1 1.5h12M3 4.5h8M1 7.5h12M3 10.5h8" />
                </Cell>
                <Cell>
                  <TextAlign lines="M1 1.5h12M5 4.5h8M1 7.5h12M5 10.5h8" />
                </Cell>
                <Cell>
                  <TextAlign lines="M1 1.5h12M1 4.5h12M1 7.5h12M1 10.5h12" />
                </Cell>
              </SmallRow>
            </SmallRows>
          </GroupBody>
          <GroupLabel>Font</GroupLabel>
        </RibbonGroup>

        <RibbonGroup $w={113}>
          <GroupBody>
            <SmallRows $pad={8}>
              <SmallRow>
                <Cell>
                  <svg width="20" height="20" viewBox="0 0 20 20">
                    <circle cx="10" cy="10" r="8.5" fill="#d8343c" stroke="#e9b7b7" />
                    <path d="M6.5 6.5l7 7M13.5 6.5l-7 7" stroke="#fff" strokeWidth="2.6" />
                  </svg>
                </Cell>
                {alignTop.map((g, i) => (
                  <Cell key={i}>{g}</Cell>
                ))}
              </SmallRow>
              <SmallRow>
                {alignBottom.map((g, i) => (
                  <Cell key={i}>{g}</Cell>
                ))}
              </SmallRow>
            </SmallRows>
          </GroupBody>
          <GroupLabel>Alignment</GroupLabel>
        </RibbonGroup>

        <RibbonGroup $w={213}>
          <GroupBody>
            <SmallRows $pad={7}>
              {[layoutTop, layoutBottom].map((row, r) => (
                <SmallRow key={r}>
                  {row.map((g, i) => (
                    <Cell key={i} $gap={i === 4 ? 4 : 0}>
                      {g}
                    </Cell>
                  ))}
                </SmallRow>
              ))}
            </SmallRows>
          </GroupBody>
          <GroupLabel>Layout</GroupLabel>
        </RibbonGroup>

        <RibbonGroup $w={153}>
          <GroupBody $pad={6}>
            {zoomButtons.map(b => (
              <BigButton key={b.label} b={b} />
            ))}
          </GroupBody>
          <GroupLabel>Zoom</GroupLabel>
        </RibbonGroup>

        <RibbonGroup $w={60}>
          <GroupBody>
            <BigButton b={{ label: 'Windows', w: 59, menu: true, icon: <WindowsIcon /> }} />
          </GroupBody>
          <GroupLabel>View</GroupLabel>
        </RibbonGroup>

        <RibbonGroup $w={51}>
          <GroupBody>
            <BigButton b={{ label: 'Scripts', w: 50, icon: <ScriptsIcon /> }} />
          </GroupBody>
          <GroupLabel>Scripts</GroupLabel>
        </RibbonGroup>

        <RibbonGroup $w={52}>
          <GroupBody>
            <BigButton b={{ label: 'Help', w: 51, icon: <HelpIcon /> }} />
          </GroupBody>
          <GroupLabel>Help</GroupLabel>
        </RibbonGroup>
      </Ribbon>

      <Workspace>
        <DockPanel $w={161} $ml={2}>
          <PanelHeader>
            <PanelTitle>Toolbox</PanelTitle>
            <PanelControls />
          </PanelHeader>
          <ScrollMark />
          <CategoryRow>
            Standard Control
            <Chev dir="up" />
          </CategoryRow>
          <ToolList>
            {tools.map((name, i) => (
              <ToolItem key={name}>
                <Svg>{toolIcons[name]}</Svg>
                <ToolLabel $link={i === 0}>{name}</ToolLabel>
              </ToolItem>
            ))}
          </ToolList>
          <ScrollMark $down />
        </DockPanel>

        <Center>
          <Designer>
            <RulerRow>
              <RulerCorner>
                <svg width="8" height="8" viewBox="0 0 8 8">
                  <path d="M1 1l5 5M6 2v4H2" fill="none" stroke="#fff" strokeWidth="1.4" />
                </svg>
              </RulerCorner>
              <TopRuler />
            </RulerRow>
            <PageRow>
              <VerticalRuler />
              <Page>
                <Printable>
                  <Band $h={96} />
                  <BandHeader>
                    <BandArrow />
                    <BandGlyph kind="header" />
                    reportHeaderBand1 [one band per report]
                  </BandHeader>
                  <Band $h={47}>
                    <TitleField $x={5} $y={2} $w={855} $h={31}>
                      History By Date
                    </TitleField>
                  </Band>
                  <BandHeader>
                    <BandArrow />
                    <BandGlyph kind="group" />
                    groupHeaderBand1
                  </BandHeader>
                  <Band $h={75}>
                    <CaptionField $x={5} $y={0} $w={44} $h={15}>
                      Site
                    </CaptionField>
                    <RuleLine $x={7} $y={15} $w={853} />
                    <SiteField $x={5} $y={17} $w={254} $h={14}>
                      [Site]
                      <BindingIcon />
                    </SiteField>
                    {captions.map(c => (
                      <CaptionField key={c.text} $x={c.x} $y={60} $w={c.w} $h={15} $right={c.right}>
                        {c.text}
                      </CaptionField>
                    ))}
                    <CaptionField $x={486} $y={44} $w={130} $h={31}>
                      Transaction Description
                    </CaptionField>
                  </Band>
                  <BandHeader $h={22}>
                    <BandArrow />
                    <BandGlyph kind="detail" />
                    detailBand1
                  </BandHeader>
                  <Band $h={16}>
                    {fields.map(f => (
                      <DataField key={f.text} $x={f.x} $y={2} $w={f.w} $h={14} $right={f.right}>
                        {f.text}
                        <BindingIcon />
                      </DataField>
                    ))}
                  </Band>
                  <Band $h={96}>
                    <RuleLine $x={5} $y={48} $w={855} />
                    <InfoField $x={5} $y={50} $w={423} $h={15}>
                      Monday, January 20, 2020
                    </InfoField>
                    <InfoField $x={437} $y={50} $w={423} $h={15} $right>
                      Page 1 of 1
                    </InfoField>
                  </Band>
                </Printable>
                <MarginLine $top={96} />
                <MarginLine $top={298} />
              </Page>
            </PageRow>
          </Designer>

          <Tray>
            <TrayItem>
              <svg width="16" height="16" viewBox="0 0 16 16">
                <circle cx="8" cy="8" r="5" fill="none" stroke="#5a5fb0" strokeWidth="3" />
                <circle cx="8" cy="8" r="7" fill="none" stroke="#6f73c0" strokeWidth="2" strokeDasharray="2.2 1.4" />
              </svg>
              history1DataSet1
            </TrayItem>
            <TrayItem>
              <svg width="16" height="16" viewBox="0 0 16 16" shapeRendering="crispEdges">
                <rect x="1.5" y="2.5" width="11" height="11" fill="#d0d0d0" stroke="#555" />
                <path d="M4 5l3 3-2 2 3 3" fill="none" stroke="#b01818" />
                <rect x="0" y="0" width="4" height="4" fill="#e8e23a" stroke="#333" />
                <rect x="11" y="11" width="5" height="4" fill="#fff" stroke="#111" />
              </svg>
              oleDbDataAdapter1
            </TrayItem>
          </Tray>

          <GroupPanel>
            <PanelHeader>
              <PanelTitle>Group and Sort</PanelTitle>
              <PanelControls />
            </PanelHeader>
            <Toolbar>
              <ToolbarButton $w={108}>
                <Svg s={16}>
                  <path d="M2 3h12v2H2zM2 3h2v10H2z" fill="#4a7cb5" />
                  <rect x="5" y="6" width="9" height="8" fill={GREEN} />
                </Svg>
                Add a Group
                <ToolbarCaret />
              </ToolbarButton>
              <ToolbarButton $w={94}>
                <Svg s={16}>
                  <path d="M1 2h8L5 8z" fill="#4a86c8" />
                  <path d="M9 6l6 9H5z" fill={GREEN} />
                </Svg>
                Add a Sort
                <ToolbarCaret />
              </ToolbarButton>
              <ToolbarButton $w={59}>
                <Svg s={16}>
                  <path d="M3 3l10 10M13 3L3 13" stroke="#d8343c" strokeWidth="2" />
                </Svg>
                Delete
              </ToolbarButton>
              <ToolbarSeparator />
              <ToolbarButton $w={78} $off>
                <Svg s={16}>
                  <circle cx="8" cy="8" r="7" fill="#b5b5b5" />
                  <path d="M8 12V5M5 8l3-3 3 3" fill="none" stroke="#fff" strokeWidth="2" />
                </Svg>
                Move Up
              </ToolbarButton>
              <ToolbarButton $w={90}>
                <Svg s={16}>
                  <circle cx="8" cy="8" r="7" fill={GREEN} />
                  <path d="M8 4v7M5 8l3 3 3-3" fill="none" stroke="#fff" strokeWidth="2" />
                </Svg>
                Move Down
              </ToolbarButton>
            </Toolbar>
            <GridBody>
              <GridHeadCell>Field Name</GridHeadCell>
              <GridHeadCell>Sort Order</GridHeadCell>
              <GridHeadCell>Show Header</GridHeadCell>
              <GridHeadCell>Show Footer</GridHeadCell>

              <GridCell>
                Site
                <ComboArrow />
              </GridCell>
              <GridCell $shade>Ascending</GridCell>
              <GridCell $shade $center>
                <CheckMark>
                  <svg width="10" height="8" viewBox="0 0 10 8">
                    <path d="M1 4l3 3 5-6" fill="none" stroke="#777" strokeWidth="1.2" />
                  </svg>
                </CheckMark>
              </GridCell>
              <GridCell $shade $center>
                <CheckMark />
              </GridCell>

              <GridCell $indent={19}>TransactionDate</GridCell>
              <GridCell>Ascending</GridCell>
              <GridCell $center>
                <CheckMark />
              </GridCell>
              <GridCell $center>
                <CheckMark />
              </GridCell>
            </GridBody>
            <BottomTabs>
              <DockTab $active $w={109}>
                <Svg s={16}>
                  <rect x="1" y="1" width="10" height="7" fill="#7fa8d6" stroke="#4a7cb5" />
                  <path d="M3 6h12l-6 9z" fill="#9ccc3c" stroke="#5f8f1e" />
                </Svg>
                Group and Sort
              </DockTab>
              <DockTab $w={98}>
                <Svg s={16}>
                  <rect x="1.5" y="1.5" width="10" height="11" fill="#fff" stroke="#5b8fcb" />
                  <circle cx="11" cy="11" r="4.5" fill="#d8343c" />
                  <path d="M9 9l4 4M13 9l-4 4" stroke="#fff" />
                </Svg>
                Scripts Errors
              </DockTab>
            </BottomTabs>
          </GroupPanel>
        </Center>

        <DockPanel $w={245} $ml={3}>
          <PanelHeader $focus>
            <PanelTitle>Report Explorer</PanelTitle>
            <PanelControls maximize />
          </PanelHeader>
          <Tree>
            {treeRows.map(r => (
              <TreeRow key={r.label}>
                <Twist $level={r.level}>{r.twist && <Chev dir={r.twist as 'down' | 'right'} />}</Twist>
                <TreeBody $selected={r.selected}>
                  {r.icon === 'styles' ? <StylesGlyph /> : <BandGlyph kind={r.icon} />}
                  {r.label}
                </TreeBody>
              </TreeRow>
            ))}
          </Tree>
          <BottomTabs>
            <DockTab $active $w={111}>
              <Svg s={16}>
                <rect x="2" y="2" width="9" height="11" fill="#dfe6ef" stroke="#777" />
                <circle cx="11" cy="9" r="4" fill={ORANGE} />
                <rect x="7" y="10" width="6" height="5" fill="#8fbf3c" stroke="#5f8f1e" />
              </Svg>
              Report Explorer
            </DockTab>
            <DockTab $w={76}>
              <Svg s={16}>
                <rect x="2" y="1" width="8" height="13" rx="2" fill="#f0b060" stroke="#b8762a" />
                <rect x="6" y="5" width="9" height="4" fill="#fff" stroke="#4a7cb5" />
                <rect x="6" y="10" width="9" height="4" fill="#fff" stroke="#4a7cb5" />
              </Svg>
              Field List
            </DockTab>
          </BottomTabs>
        </DockPanel>
      </Workspace>
    </Window>
  )
}
